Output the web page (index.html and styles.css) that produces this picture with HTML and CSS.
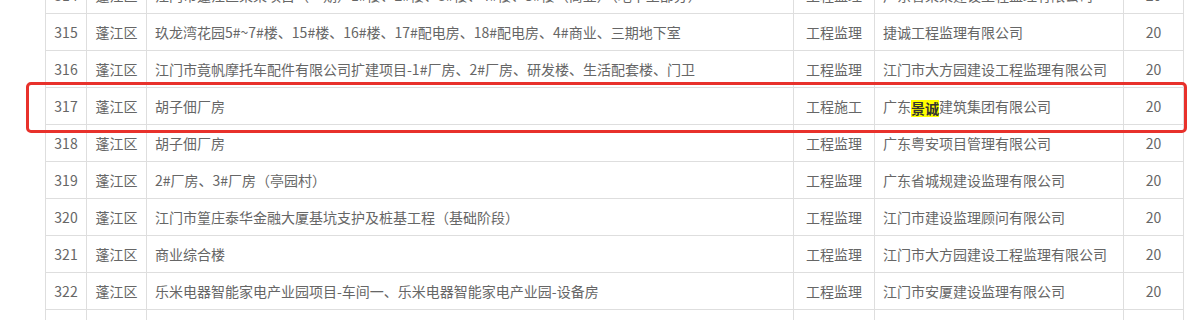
FILE: index.html
```html
<!DOCTYPE html>
<html lang="zh-CN">
<head>
<meta charset="utf-8">
<link rel="stylesheet" href="styles.css">
</head>
<body>
<div class="page">
  <table class="list">
    <colgroup>
      <col class="c-no"><col class="c-area"><col class="c-name"><col class="c-type"><col class="c-co"><col class="c-score">
    </colgroup>
    <tbody>
      <tr><td class="ctr">314</td><td class="ctr">蓬江区</td><td class="lft">江门市蓬江区某某项目（一期）1#楼、2#楼、3#楼、4#楼、5#楼（商业）（地下室部分）</td><td class="ctr">工程监理</td><td class="lft">广东省某某建设工程监理有限公司</td><td class="ctr">20</td></tr>
      <tr><td class="ctr">315</td><td class="ctr">蓬江区</td><td class="lft">玖龙湾花园5#~7#楼、15#楼、16#楼、17#配电房、18#配电房、4#商业、三期地下室</td><td class="ctr">工程监理</td><td class="lft">捷诚工程监理有限公司</td><td class="ctr">20</td></tr>
      <tr><td class="ctr">316</td><td class="ctr">蓬江区</td><td class="lft">江门市竟帆摩托车配件有限公司扩建项目-1#厂房、2#厂房、研发楼、生活配套楼、门卫</td><td class="ctr">工程监理</td><td class="lft">江门市大方园建设工程监理有限公司</td><td class="ctr">20</td></tr>
      <tr><td class="ctr">317</td><td class="ctr">蓬江区</td><td class="lft">胡子佃厂房</td><td class="ctr">工程施工</td><td class="lft">广东<span class="hl">景诚</span>建筑集团有限公司</td><td class="ctr">20</td></tr>
      <tr><td class="ctr">318</td><td class="ctr">蓬江区</td><td class="lft">胡子佃厂房</td><td class="ctr">工程监理</td><td class="lft">广东粤安项目管理有限公司</td><td class="ctr">20</td></tr>
      <tr><td class="ctr">319</td><td class="ctr">蓬江区</td><td class="lft">2#厂房、3#厂房（亭园村）</td><td class="ctr">工程监理</td><td class="lft">广东省城规建设监理有限公司</td><td class="ctr">20</td></tr>
      <tr><td class="ctr">320</td><td class="ctr">蓬江区</td><td class="lft">江门市篁庄泰华金融大厦基坑支护及桩基工程（基础阶段）</td><td class="ctr">工程监理</td><td class="lft">江门市建设监理顾问有限公司</td><td class="ctr">20</td></tr>
      <tr><td class="ctr">321</td><td class="ctr">蓬江区</td><td class="lft">商业综合楼</td><td class="ctr">工程监理</td><td class="lft">江门市大方园建设工程监理有限公司</td><td class="ctr">20</td></tr>
      <tr><td class="ctr">322</td><td class="ctr">蓬江区</td><td class="lft">乐米电器智能家电产业园项目-车间一、乐米电器智能家电产业园-设备房</td><td class="ctr">工程监理</td><td class="lft">江门市安厦建设监理有限公司</td><td class="ctr">20</td></tr>
      <tr><td class="ctr">323</td><td class="ctr">蓬江区</td><td class="lft">厂房</td><td class="ctr">工程监理</td><td class="lft">江门市建设监理顾问有限公司</td><td class="ctr">20</td></tr>
    </tbody>
  </table>
  <div class="mark"></div>
</div>
</body>
</html>
```

FILE: styles.css
```css
html, body {
  margin: 0;
  padding: 0;
  background: #fff;
}
.page {
  position: relative;
  height: 320px;
  overflow: hidden;
}
.list {
  margin: -24px 0 0 45px;
  border-collapse: collapse;
  table-layout: fixed;
  width: 1138px;
  font-family: "Noto Sans CJK SC", "Noto Sans", sans-serif;
  font-size: 14px;
  color: #666;
}
.c-no { width: 41px; }
.c-area { width: 60px; }
.c-name { width: 647px; }
.c-type { width: 81px; }
.c-co { width: 249px; }
.c-score { width: 60px; }
.list td {
  border: 1px solid #dedede;
  height: 36px;
  padding: 0;
  line-height: 20px;
  vertical-align: middle;
  white-space: nowrap;
  overflow: hidden;
}
.list td.ctr { text-align: center; }
.list td.lft { text-align: left; padding-left: 8px; }
.hl {
  display: inline-block;
  height: 17px;
  line-height: 17px;
  background: #ffff00;
  color: #333;
  font-weight: bold;
  vertical-align: -2px;
}
.mark {
  position: absolute;
  left: 26px;
  top: 82px;
  width: 1155px;
  height: 45px;
  border: 3px solid #e8312b;
  border-radius: 5px;
}
```
